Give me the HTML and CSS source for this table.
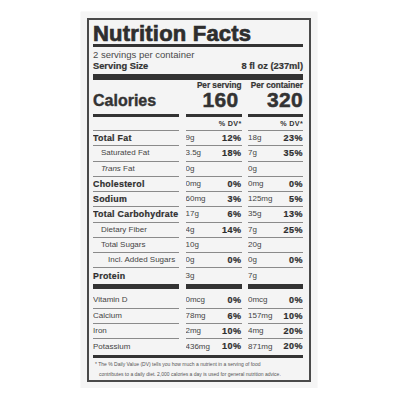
FILE: index.html
```html
<!DOCTYPE html>
<html>
<head>
<meta charset="utf-8">
<link rel="stylesheet" href="styles.css">
</head>
<body>
<div class="card">
  <div class="label">
    <h1 class="title">Nutrition Facts</h1>
    <div class="rule-title"></div>
    <div class="servings">2 servings per container</div>
    <div class="serving-size"><span>Serving Size</span><span>8 fl oz (237ml)</span></div>
    <div class="bar"></div>

    <div class="grid head"><div></div><div class="r">Per serving</div><div class="r">Per container</div></div>
    <div class="grid cal"><div class="cal-label">Calories</div><div class="r num">160</div><div class="r num">320</div></div>
    <div class="grid thick"><div></div><div></div><div></div></div>

    <div class="grid row dvhead"><div></div><div class="r">% DV*</div><div class="r">% DV*</div></div>

    <div class="grid row"><div class="n b">Total Fat</div><div class="v"><span>9g</span><b>12%</b></div><div class="v"><span>18g</span><b>23%</b></div></div>
    <div class="grid row"><div class="n i1">Saturated Fat</div><div class="v"><span>3.5g</span><b>18%</b></div><div class="v"><span>7g</span><b>35%</b></div></div>
    <div class="grid row"><div class="n i1"><em>Trans</em> Fat</div><div class="v"><span>0g</span></div><div class="v"><span>0g</span></div></div>
    <div class="grid row"><div class="n b">Cholesterol</div><div class="v"><span>0mg</span><b>0%</b></div><div class="v"><span>0mg</span><b>0%</b></div></div>
    <div class="grid row"><div class="n b">Sodium</div><div class="v"><span>60mg</span><b>3%</b></div><div class="v"><span>125mg</span><b>5%</b></div></div>
    <div class="grid row"><div class="n b">Total Carbohydrate</div><div class="v"><span>17g</span><b>6%</b></div><div class="v"><span>35g</span><b>13%</b></div></div>
    <div class="grid row"><div class="n i1">Dietary Fiber</div><div class="v"><span>4g</span><b>14%</b></div><div class="v"><span>7g</span><b>25%</b></div></div>
    <div class="grid row"><div class="n i1">Total Sugars</div><div class="v"><span>10g</span></div><div class="v"><span>20g</span></div></div>
    <div class="grid row"><div class="n i2">Incl. Added Sugars</div><div class="v"><span>0g</span><b>0%</b></div><div class="v"><span>0g</span><b>0%</b></div></div>
    <div class="grid protein"><div class="n b">Protein</div><div class="v"><span>3g</span></div><div class="v"><span>7g</span></div></div>
    <div class="grid pbar"><div></div><div></div><div></div></div>

    <div class="vitamins">
      <div class="grid row"><div class="n">Vitamin D</div><div class="v"><span>0mcg</span><b>0%</b></div><div class="v"><span>0mcg</span><b>0%</b></div></div>
      <div class="grid row"><div class="n">Calcium</div><div class="v"><span>78mg</span><b>6%</b></div><div class="v"><span>157mg</span><b>10%</b></div></div>
      <div class="grid row"><div class="n">Iron</div><div class="v"><span>2mg</span><b>10%</b></div><div class="v"><span>4mg</span><b>20%</b></div></div>
      <div class="grid row last"><div class="n">Potassium</div><div class="v"><span>436mg</span><b>10%</b></div><div class="v"><span>871mg</span><b>20%</b></div></div>
    </div>
    <div class="rule-bottom"></div>
    <p class="foot">* The % Daily Value (DV) tells you how much a nutrient in a serving of food<br>contributes to a daily diet. 2,000 calories a day is used for general nutrition advice.</p>
  </div>
</div>
</body>
</html>
```
FILE: styles.css
```css
html, body {
  margin: 0;
  padding: 0;
  background: #ffffff;
}
body {
  font-family: "Liberation Sans", Arial, sans-serif;
  color: #3a3a3a;
}
.card {
  width: 236px;
  margin: 12px 0 0 81px;
  padding: 6px;
  box-sizing: border-box;
  background: #f5f5f5;
  box-shadow: 0 0 1px #d8d8d8;
}
.label {
  border: 2px solid #4a4a4a;
  padding: 3px 6px 1px 4px;
  background: #f4f4f4;
}
.title {
  margin: 0;
  font-size: 22px;
  line-height: 21px;
  font-weight: 700;
  color: #2e2e2e;
  -webkit-text-stroke: 0.7px #2e2e2e;
  letter-spacing: 0.2px;
}
.rule-title {
  height: 3px;
  background: #333;
}
.servings {
  margin-top: 2px;
  font-size: 9.5px;
  line-height: 11px;
  color: #4a4a4a;
}
.serving-size {
  margin-top: 1px;
  display: flex;
  justify-content: space-between;
  font-size: 9.3px;
  line-height: 11px;
  font-weight: 700;
  color: #333;
  -webkit-text-stroke: 0.2px #333;
}
.bar {
  margin-top: 2px;
  height: 6px;
  background: #333;
}
.grid {
  display: grid;
  grid-template-columns: 86px 56px 55px;
  column-gap: 6.5px;
}
.r {
  text-align: right;
}
.head {
  margin-top: 1px;
  font-size: 8.2px;
  line-height: 9px;
  font-weight: 700;
  color: #333;
  -webkit-text-stroke: 0.2px #333;
}
.cal {
  font-weight: 700;
  color: #333;
}
.cal-label {
  font-size: 16px;
  line-height: 20px;
  padding-top: 1px;
  -webkit-text-stroke: 0.4px #333;
}
.num {
  font-size: 21px;
  line-height: 20px;
  letter-spacing: 0.3px;
  -webkit-text-stroke: 0.5px #333;
}
.cal .num:nth-child(2) {
  padding-right: 3px;
}
.thick {
  margin-top: 3px;
}
.thick > div {
  height: 3px;
  background: #333;
}
.row > div {
  border-bottom: 1px solid #8a8a8a;
  height: 14.25px;
  line-height: 14.25px;
  white-space: nowrap;
  overflow: hidden;
}
.dvhead > div {
  height: 13px;
  line-height: 13px;
  font-size: 7.2px;
  font-weight: 700;
  color: #333;
  letter-spacing: 0.3px;
}
.n {
  font-size: 8px;
  color: #444;
}
.n.b {
  font-size: 8.8px;
  font-weight: 700;
  color: #2e2e2e;
  letter-spacing: 0.3px;
  -webkit-text-stroke: 0.2px #2e2e2e;
}
.n.i1 {
  padding-left: 8px;
}
.n.i2 {
  padding-left: 15px;
}
.v {
  display: flex;
  justify-content: space-between;
  font-size: 8px;
  color: #444;
}
.v b {
  font-size: 9px;
  font-weight: 700;
  color: #2e2e2e;
  letter-spacing: 0.5px;
  -webkit-text-stroke: 0.2px #2e2e2e;
}
.protein {
  margin-top: 1px;
}
.protein > div {
  height: 15px;
  line-height: 14px;
}
.pbar > div {
  height: 5px;
  background: #333;
}
.vitamins {
  padding-top: 4px;
}
.vitamins .row.last > div {
  border-bottom: none;
  height: 15px;
  line-height: 15px;
}
.rule-bottom {
  margin-top: 1px;
  height: 3px;
  background: #333;
}
.foot {
  margin: 1px 0 0 0;
  padding-left: 6px;
  text-indent: -4px;
  font-size: 5px;
  line-height: 10px;
  color: #555;
  white-space: nowrap;
}
```
